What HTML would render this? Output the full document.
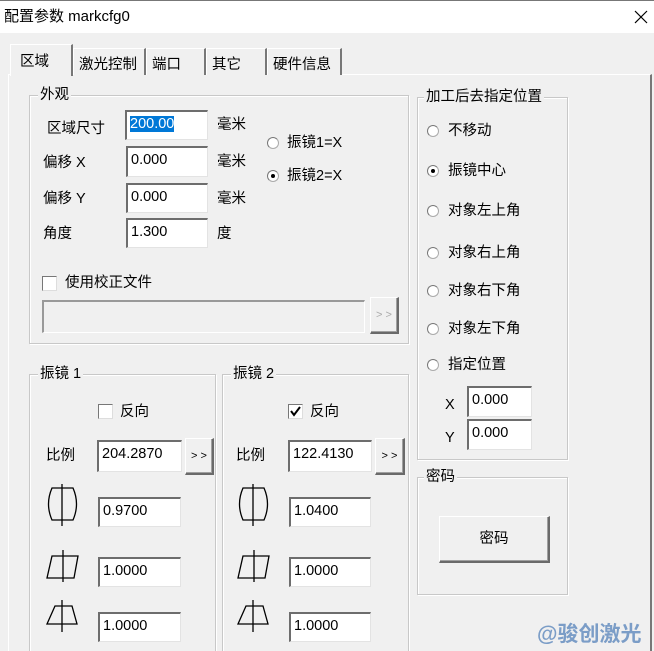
<!DOCTYPE html>
<html><head><meta charset="utf-8"><style>
*{margin:0;padding:0;box-sizing:border-box}
html,body{width:654px;height:651px;overflow:hidden}
body{background:#f0f0f0;position:relative;font-family:"Liberation Sans","Noto Sans CJK SC",sans-serif;font-size:14px;color:#000}
.a{position:absolute;white-space:nowrap}
.t{position:absolute;white-space:nowrap;line-height:16px;font-size:14.5px}
.ed{position:absolute;background:#fff;border-top:2px solid #6d6d6d;border-left:2px solid #6d6d6d;border-bottom:1px solid #e3e3e3;border-right:1px solid #e3e3e3;padding:2px 0 0 3px;font-size:14.5px;line-height:20px}
.gb{position:absolute;border:1px solid #c8c8c8;box-shadow:inset 1px 1px 0 #fff,1px 1px 0 #fff}
.gl{position:absolute;background:#f0f0f0;padding:0 2px;line-height:14px;top:-8px;left:8px;font-size:14.5px}
.btn{position:absolute;background:#f0f0f0;border-top:1px solid #fff;border-left:1px solid #fff;border-right:2px solid #6a6a6a;border-bottom:2px solid #6a6a6a;box-shadow:inset -1px -1px 0 #a0a0a0;font-size:11px;text-align:center}
.rb{position:absolute;width:12px;height:12px;border-radius:50%;background:#fff;border:1px solid #aaa;border-top-color:#777;border-left-color:#777}
.rb.on::after{content:"";position:absolute;left:3px;top:3px;width:4px;height:4px;border-radius:50%;background:#000}
.cb{position:absolute;width:15px;height:15px;background:#fff;border-top:1px solid #777;border-left:1px solid #777;border-right:1px solid #ddd;border-bottom:1px solid #ddd}
.tab{position:absolute;top:48px;height:27px;border-top:1px solid #fff;border-left:1px solid #fff;border-right:2px solid #777;padding:4px 0 0 5px;background:#f0f0f0;font-size:14.5px}
</style></head><body>
<div class="a" style="left:0;top:0;width:654px;height:33px;background:#fff;border-top:1px solid #777"></div>
<div class="t" style="left:4px;top:9px;font-size:15px">配置参数 markcfg0</div>
<svg class="a" style="left:634px;top:10px" width="14" height="14"><path d="M1 1L13 13M13 1L1 13" stroke="#000" stroke-width="1.2"/></svg>

<div class="a" style="left:8px;top:74px;width:644px;height:590px;border-top:1px solid #fff;border-left:1px solid #fff;border-right:2px solid #777"></div>
<div class="tab" style="left:73px;width:73px">激光控制</div>
<div class="tab" style="left:146px;width:60px">端口</div>
<div class="tab" style="left:206px;width:61px">其它</div>
<div class="tab" style="left:267px;width:75px">硬件信息</div>
<div class="tab" style="left:10px;top:44px;width:63px;height:32px;padding:5px 0 0 9px;border-bottom:none">区域</div>

<div class="gb" style="left:29px;top:95px;width:380px;height:249px"><div class="gl" style="left:8px">外观</div></div>
<div class="t" style="left:47px;top:121px">区域尺寸</div>
<div class="ed" style="left:125px;top:110px;width:83px;height:30px"><span style="background:#0078d7;color:#fff">200.00</span></div>
<div class="t" style="left:217px;top:117px">毫米</div>
<div class="t" style="left:43px;top:155px">偏移 X</div>
<div class="ed" style="left:126px;top:146px;width:82px;height:31px">0.000</div>
<div class="t" style="left:217px;top:154px">毫米</div>
<div class="t" style="left:43px;top:191px">偏移 Y</div>
<div class="ed" style="left:126px;top:183px;width:82px;height:30px">0.000</div>
<div class="t" style="left:217px;top:191px">毫米</div>
<div class="t" style="left:43px;top:226px">角度</div>
<div class="ed" style="left:126px;top:218px;width:82px;height:30px">1.300</div>
<div class="t" style="left:217px;top:226px">度</div>
<div class="rb" style="left:267px;top:137px"></div><div class="t" style="left:287px;top:135px">振镜1=X</div>
<div class="rb on" style="left:267px;top:170px"></div><div class="t" style="left:287px;top:168px">振镜2=X</div>
<div class="cb" style="left:42px;top:276px"></div><div class="t" style="left:65px;top:275px">使用校正文件</div>
<div class="a" style="left:42px;top:300px;width:323px;height:33px;border-top:2px solid #999;border-left:2px solid #999;border-bottom:1px solid #fff;border-right:1px solid #fff"></div>
<div class="btn" style="left:370px;top:297px;width:29px;height:37px;line-height:34px;color:#aaa">&gt; &gt;</div>

<div class="gb" style="left:29px;top:374px;width:187px;height:290px"><div class="gl">振镜 1</div></div>
<div class="gb" style="left:222px;top:374px;width:187px;height:290px"><div class="gl">振镜 2</div></div>

<div class="cb" style="left:98px;top:404px"></div><div class="t" style="left:120px;top:404px">反向</div>
<div class="cb" style="left:288px;top:404px"></div><div class="t" style="left:310px;top:404px">反向</div>
<svg class="a" style="left:289px;top:405px" width="14" height="14"><path d="M2 6L5 10L11 2" stroke="#000" stroke-width="2" fill="none"/></svg>

<div class="t" style="left:46px;top:448px">比例</div>
<div class="ed" style="left:97px;top:440px;width:85px;height:32px">204.2870</div>
<div class="btn" style="left:185px;top:438px;width:29px;height:37px;line-height:34px">&gt; &gt;</div>
<div class="t" style="left:236px;top:448px">比例</div>
<div class="ed" style="left:288px;top:440px;width:84px;height:32px">122.4130</div>
<div class="btn" style="left:375px;top:438px;width:30px;height:37px;line-height:34px">&gt; &gt;</div>

<div class="ed" style="left:98px;top:497px;width:83px;height:30px">0.9700</div>
<div class="ed" style="left:98px;top:557px;width:83px;height:30px">1.0000</div>
<div class="ed" style="left:98px;top:612px;width:83px;height:30px">1.0000</div>
<div class="ed" style="left:289px;top:497px;width:82px;height:30px">1.0400</div>
<div class="ed" style="left:289px;top:557px;width:82px;height:30px">1.0000</div>
<div class="ed" style="left:289px;top:612px;width:82px;height:30px">1.0000</div>

<svg class="a" style="left:44px;top:484px" width="40" height="160" fill="none" stroke="#000" stroke-width="1.3">
<path d="M8 4H29Q36 20 29 36H8Q1 20 8 4Z"/><path d="M18 0V42"/>
<path d="M8 72H34L30 94H3Z"/><path d="M19 66V98"/>
<path d="M11 122H28L33 140H3Z"/><path d="M18 116V148"/>
</svg>
<svg class="a" style="left:235px;top:484px" width="40" height="160" fill="none" stroke="#000" stroke-width="1.3">
<path d="M8 4H29Q36 20 29 36H8Q1 20 8 4Z"/><path d="M18 0V42"/>
<path d="M8 72H34L30 94H3Z"/><path d="M19 66V98"/>
<path d="M11 122H28L33 140H3Z"/><path d="M18 116V148"/>
</svg>

<div class="gb" style="left:417px;top:97px;width:151px;height:363px"><div class="gl" style="left:6px">加工后去指定位置</div></div>
<div class="rb" style="left:427px;top:125px"></div><div class="t" style="left:448px;top:123px">不移动</div>
<div class="rb on" style="left:427px;top:165px"></div><div class="t" style="left:448px;top:163px">振镜中心</div>
<div class="rb" style="left:427px;top:205px"></div><div class="t" style="left:448px;top:203px">对象左上角</div>
<div class="rb" style="left:427px;top:247px"></div><div class="t" style="left:448px;top:245px">对象右上角</div>
<div class="rb" style="left:427px;top:285px"></div><div class="t" style="left:448px;top:283px">对象右下角</div>
<div class="rb" style="left:427px;top:323px"></div><div class="t" style="left:448px;top:321px">对象左下角</div>
<div class="rb" style="left:427px;top:359px"></div><div class="t" style="left:448px;top:357px">指定位置</div>
<div class="t" style="left:445px;top:397px">X</div>
<div class="ed" style="left:467px;top:386px;width:65px;height:31px">0.000</div>
<div class="t" style="left:445px;top:430px">Y</div>
<div class="ed" style="left:467px;top:419px;width:65px;height:31px">0.000</div>

<div class="gb" style="left:417px;top:477px;width:151px;height:118px"><div class="gl" style="left:6px">密码</div></div>
<div class="btn" style="left:439px;top:516px;width:111px;height:47px;font-size:14.5px;line-height:44px">密码</div>

<div class="t" style="left:537px;top:622px;font-size:21px;line-height:26px;font-weight:bold;color:#7b9dc7">@骏创激光</div>
</body></html>
